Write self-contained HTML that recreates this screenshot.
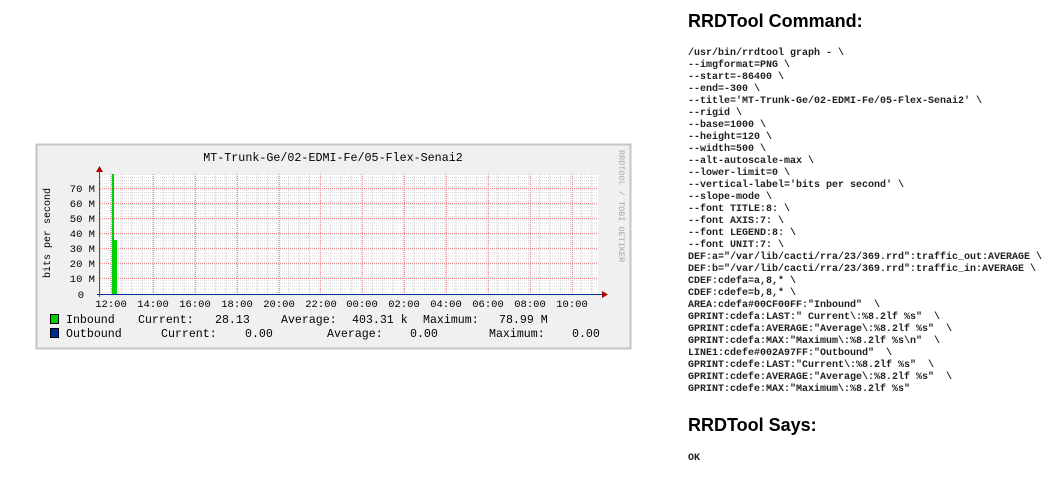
<!DOCTYPE html>
<html><head><meta charset="utf-8"><style>
body{margin:0;background:#fff;width:1062px;height:486px;overflow:hidden;position:relative;font-family:"Liberation Sans",sans-serif}
h2{position:absolute;left:688px;margin:0;font-size:18px;font-weight:bold;color:#000}
pre{position:absolute;left:688px;top:48px;margin:0;font-family:"Liberation Mono",monospace;font-size:10px;line-height:12px;font-weight:bold;color:#222}
.ok{position:absolute;left:688px;top:453px;font-family:"Liberation Mono",monospace;font-size:10px;font-weight:bold;color:#222}
svg{position:absolute;left:0;top:0}
</style></head><body>
<svg width="1062" height="486" font-family="Liberation Mono, monospace">
<defs>
<pattern id="vg" x="100" y="0" width="10.45" height="10" patternUnits="userSpaceOnUse"><line x1="0.5" y1="0" x2="0.5" y2="10" stroke="#cfcfcf" stroke-dasharray="1,1"/></pattern>
<pattern id="hg" x="0" y="174" width="10" height="3.02" patternUnits="userSpaceOnUse"><line x1="0" y1="0.5" x2="10" y2="0.5" stroke="#d8d8d8" stroke-dasharray="1,1"/></pattern>
</defs>
<rect x="36.5" y="144.5" width="594" height="204" fill="#f0f0f0" stroke="#c4c4c4" stroke-width="2"/>
<rect x="100" y="174" width="498" height="120" fill="#fff"/>
<rect x="100" y="174" width="498" height="120" fill="url(#vg)"/>
<rect x="100" y="174" width="498" height="120" fill="url(#hg)"/>
<g stroke="#f08a8a" stroke-dasharray="1,1">
<line x1="111.5" y1="174" x2="111.5" y2="294"/><line x1="153.5" y1="174" x2="153.5" y2="294"/><line x1="195.5" y1="174" x2="195.5" y2="294"/><line x1="237.5" y1="174" x2="237.5" y2="294"/><line x1="279.5" y1="174" x2="279.5" y2="294"/><line x1="320.5" y1="174" x2="320.5" y2="294"/><line x1="362.5" y1="174" x2="362.5" y2="294"/><line x1="404.5" y1="174" x2="404.5" y2="294"/><line x1="446.5" y1="174" x2="446.5" y2="294"/><line x1="488.5" y1="174" x2="488.5" y2="294"/><line x1="530.5" y1="174" x2="530.5" y2="294"/><line x1="572.5" y1="174" x2="572.5" y2="294"/>
<line x1="100" y1="188.5" x2="598" y2="188.5"/><line x1="100" y1="203.5" x2="598" y2="203.5"/><line x1="100" y1="218.5" x2="598" y2="218.5"/><line x1="100" y1="233.5" x2="598" y2="233.5"/><line x1="100" y1="248.5" x2="598" y2="248.5"/><line x1="100" y1="263.5" x2="598" y2="263.5"/><line x1="100" y1="278.5" x2="598" y2="278.5"/>
</g>
<rect x="112" y="174" width="2" height="120" fill="#00cf00"/>
<rect x="114" y="240" width="3" height="54" fill="#00cf00"/>
<line x1="99.5" y1="172" x2="99.5" y2="297" stroke="#555"/>
<line x1="97" y1="294.5" x2="603" y2="294.5" stroke="#002a97"/>
<polygon points="96,172 103,172 99.5,166" fill="#a00"/>
<polygon points="602,291 602,298 608,294.5" fill="#a00"/>
<text x="333" y="161" font-size="11.7" text-anchor="middle" fill="#000">MT-Trunk-Ge/02-EDMI-Fe/05-Flex-Senai2</text>
<g font-size="10.5" text-anchor="end" fill="#000">
<text x="95" y="192">70 M</text><text x="95" y="207">60 M</text><text x="95" y="222">50 M</text><text x="95" y="237">40 M</text><text x="95" y="252">30 M</text><text x="95" y="267">20 M</text><text x="95" y="282">10 M</text><text x="84" y="298">0</text>
</g>
<text transform="translate(50,233) rotate(-90)" font-size="10" text-anchor="middle">bits per second</text>
<text transform="translate(619,150) rotate(90)" font-size="8.5" fill="#aaa">RRDTOOL / TOBI OETIKER</text>
<g font-size="10.5" text-anchor="middle">
<text x="111" y="307">12:00</text><text x="153" y="307">14:00</text><text x="195" y="307">16:00</text><text x="237" y="307">18:00</text><text x="279" y="307">20:00</text><text x="321" y="307">22:00</text><text x="362" y="307">00:00</text><text x="404" y="307">02:00</text><text x="446" y="307">04:00</text><text x="488" y="307">06:00</text><text x="530" y="307">08:00</text><text x="572" y="307">10:00</text>
</g>
<rect x="50.5" y="314.5" width="8" height="9" fill="#00cf00" stroke="#000"/>
<rect x="50.5" y="328.5" width="8" height="9" fill="#002a97" stroke="#000"/>
<g font-size="11.6">
<text x="66" y="323">Inbound</text><text x="138" y="323">Current:</text><text x="215" y="323">28.13</text><text x="281" y="323">Average:</text><text x="352" y="323">403.31 k</text><text x="423" y="323">Maximum:</text><text x="499" y="323">78.99 M</text>
<text x="66" y="337">Outbound</text><text x="161" y="337">Current:</text><text x="245" y="337">0.00</text><text x="327" y="337">Average:</text><text x="410" y="337">0.00</text><text x="489" y="337">Maximum:</text><text x="572" y="337">0.00</text>
</g>
</svg>
<h2 style="top:11px">RRDTool Command:</h2>
<pre>/usr/bin/rrdtool graph - \
--imgformat=PNG \
--start=-86400 \
--end=-300 \
--title='MT-Trunk-Ge/02-EDMI-Fe/05-Flex-Senai2' \
--rigid \
--base=1000 \
--height=120 \
--width=500 \
--alt-autoscale-max \
--lower-limit=0 \
--vertical-label='bits per second' \
--slope-mode \
--font TITLE:8: \
--font AXIS:7: \
--font LEGEND:8: \
--font UNIT:7: \
DEF:a="/var/lib/cacti/rra/23/369.rrd":traffic_out:AVERAGE \
DEF:b="/var/lib/cacti/rra/23/369.rrd":traffic_in:AVERAGE \
CDEF:cdefa=a,8,* \
CDEF:cdefe=b,8,* \
AREA:cdefa#00CF00FF:"Inbound"  \
GPRINT:cdefa:LAST:" Current\:%8.2lf %s"  \
GPRINT:cdefa:AVERAGE:"Average\:%8.2lf %s"  \
GPRINT:cdefa:MAX:"Maximum\:%8.2lf %s\n"  \
LINE1:cdefe#002A97FF:"Outbound"  \
GPRINT:cdefe:LAST:"Current\:%8.2lf %s"  \
GPRINT:cdefe:AVERAGE:"Average\:%8.2lf %s"  \
GPRINT:cdefe:MAX:"Maximum\:%8.2lf %s"</pre>
<h2 style="top:415px">RRDTool Says:</h2>
<div class="ok">OK</div>
</body></html>
